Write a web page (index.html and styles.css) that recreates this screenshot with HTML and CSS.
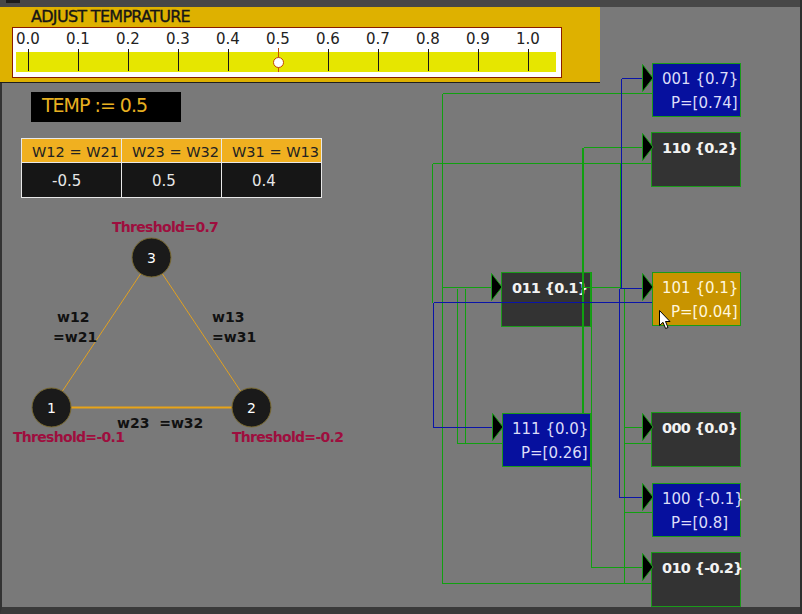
FILE: index.html
```html
<!DOCTYPE html>
<html>
<head>
<meta charset="utf-8">
<title>Hopfield</title>
<link rel="stylesheet" href="styles.css">
</head>
<body>
<div class="window">
  <div class="titlebar"><span class="tb-btn"></span></div>
  <div class="panel">
    <div class="panel-title">ADJUST TEMPRATURE</div>
    <div class="scale">
      <div class="labels">
        <span>0.0</span><span>0.1</span><span>0.2</span><span>0.3</span><span>0.4</span><span>0.5</span><span>0.6</span><span>0.7</span><span>0.8</span><span>0.9</span><span>1.0</span>
      </div>
      <div class="bar">
        <div class="marks"><span></span><span></span><span></span><span></span><span></span><span></span><span></span><span></span><span></span><span></span><span></span></div>
        <div class="knob-line"></div>
        <div class="knob"></div>
      </div>
    </div>
  </div>
  <div class="main">
    <div class="temp">TEMP := 0.5</div>
    <div class="weights">
      <div class="h">W12 = W21</div><div class="h">W23 = W32</div><div class="h">W31 = W13</div>
      <div class="d">-0.5</div><div class="d">0.5</div><div class="d">0.4</div>
    </div>
    <svg class="triangle" width="360" height="240" viewBox="0 0 360 240">
      <g class="edges">
        <line x1="149.5" y1="47.5" x2="49.5" y2="197.5"/>
        <line x1="149.5" y1="47.5" x2="249.5" y2="197.5"/>
        <line class="flat" x1="49.5" y1="197.5" x2="249.5" y2="197.5"/>
      </g>
      <g class="nodes">
        <circle cx="149.5" cy="47.5" r="19.5"/>
        <circle cx="49.5" cy="197.5" r="19.5"/>
        <circle cx="249.5" cy="197.5" r="19.5"/>
      </g>
      <text class="num" x="149.5" y="52.5">3</text>
      <text class="num" x="49.5" y="202.5">1</text>
      <text class="num" x="249.5" y="202.5">2</text>
      <text class="th" x="110" y="22">Threshold=0.7</text>
      <text class="th" x="11" y="232">Threshold=-0.1</text>
      <text class="th" x="230" y="232">Threshold=-0.2</text>
      <text class="wl" x="55" y="112">w12</text>
      <text class="wl" x="51" y="132">=w21</text>
      <text class="wl" x="210" y="112">w13</text>
      <text class="wl" x="210" y="132">=w31</text>
      <text class="wl" x="115" y="218" xml:space="preserve">w23  =w32</text>
    </svg>
  </div>

  <div class="net">
    <div class="node blue" style="left:652px;top:63px"><div class="l1">001 {0.7}</div><div class="l2">P=[0.74]</div></div>
    <div class="node dark" style="left:651px;top:132px"><div class="l1">110 {0.2}</div></div>
    <div class="node dark" style="left:501px;top:272px"><div class="l1">011 {0.1}</div></div>
    <div class="node gold" style="left:652px;top:272px"><div class="l1">101 {0.1}</div><div class="l2">P=[0.04]</div></div>
    <div class="node blue" style="left:502px;top:413px"><div class="l1">111 {0.0}</div><div class="l2">P=[0.26]</div></div>
    <div class="node dark" style="left:651px;top:412px"><div class="l1">000 {0.0}</div></div>
    <div class="node blue" style="left:652px;top:483px"><div class="l1">100 {-0.1}</div><div class="l2">P=[0.8]</div></div>
    <div class="node dark" style="left:651px;top:552px"><div class="l1">010 {-0.2}</div></div>

    <svg class="wires" width="802" height="614" viewBox="0 0 802 614" shape-rendering="crispEdges">
      <g class="green">
        <path d="M442.5 93.5 H652"/>
        <path d="M442.5 93.5 V583.5 H652"/>
        <path d="M432.5 163.5 H652"/>
        <path d="M432.5 163.5 V302.5"/>
        <path d="M583.5 147.5 H642"/>
        <path class="thick" d="M583 147.5 V413"/>
        <path d="M583.5 287.5 H620.5"/>
        <path d="M620.5 163.5 V287.5"/>
        <path d="M442.5 287.5 H491"/>
        <path d="M457.5 288.5 V443.5 H502"/>
        <path d="M465.5 288.5 V443.5"/>
        <path d="M591.5 272 V567.5 H642"/>
        <path d="M624.5 287.5 V583.5"/>
        <path d="M624.5 427.5 H642"/>
        <path d="M624.5 443.5 H652"/>
        <path d="M624.5 512.5 H652"/>
      </g>
      <g class="blue">
        <path d="M621.5 78.5 H642"/>
        <path d="M621.5 78.5 V288.5"/>
        <path d="M619.5 288.5 H642"/>
        <path d="M619.5 288.5 V497.5 H645"/>
        <path d="M433.5 302.5 H652"/>
        <path d="M433.5 302.5 V427.5 H495"/>
      </g>
      <g class="arrows" shape-rendering="auto">
        <polygon points="642.5,64.5 642.5,91.5 653,78"/>
        <polygon points="642.5,133.5 642.5,160.5 653,147"/>
        <polygon points="491.5,273.5 491.5,300.5 502,287"/>
        <polygon points="642.5,273.5 642.5,300.5 653,287"/>
        <polygon points="492.5,413.5 492.5,440.5 503,427"/>
        <polygon points="642.5,413.5 642.5,440.5 653,427"/>
        <polygon points="642.5,483.5 642.5,510.5 653,497"/>
        <polygon points="642.5,553.5 642.5,580.5 653,567"/>
      </g>
    </svg>
    <svg class="cursor" width="13" height="20" viewBox="0 0 13 20">
      <path d="M0.5 0.5 L0.5 15.5 L4 12.3 L6.6 18.5 L9 17.5 L6.5 11.5 L11 11.5 Z"/>
    </svg>
  </div>
</div>
</body>
</html>
```

FILE: styles.css
```css
* { box-sizing: border-box; }
html, body { margin: 0; padding: 0; }
body {
  width: 802px;
  height: 614px;
  overflow: hidden;
  background: #797979;
  font-family: "DejaVu Sans", "Noto Sans", sans-serif;
}
.window {
  position: relative;
  width: 802px;
  height: 614px;
  background: #797979;
  border-right: 2px solid #2e2e2e;
  overflow: hidden;
}
.titlebar {
  height: 7px;
  background: #474747;
  display: flex;
  align-items: flex-start;
}
.tb-btn {
  width: 14px;
  height: 3px;
  margin-left: 6px;
  background: #1c1c1c;
}
.panel {
  width: 600px;
  height: 76px;
  background: #deb100;
  border-bottom: 1px solid #1e1e1e;
}
.panel-title {
  height: 20px;
  padding-left: 31px;
  font-size: 16px;
  line-height: 19px;
  letter-spacing: -0.7px;
  color: #161616;
  -webkit-text-stroke: 0.35px #161616;
  white-space: nowrap;
}
.scale {
  margin-left: 12px;
  width: 550px;
  height: 51px;
  background: #fff;
  border: 1px solid #8a1c00;
}
.labels {
  display: flex;
  margin-left: -10px;
  height: 24px;
  padding-top: 3px;
  font-size: 15px;
  line-height: 16px;
  color: #222;
}
.labels span {
  flex: none;
  width: 50px;
  text-align: center;
}
.bar {
  position: relative;
  margin-left: 3px;
  width: 540px;
  height: 20px;
  background: #e6e600;
}
.marks {
  display: flex;
  margin-left: -13px;
}
.marks span {
  flex: none;
  width: 50px;
  display: flex;
  justify-content: center;
}
.marks span::before {
  content: "";
  width: 1px;
  height: 22px;
  margin-top: -3px;
  background: #151515;
}
.knob-line {
  position: absolute;
  left: 262px;
  top: -4px;
  width: 1px;
  height: 24px;
  background: #c85000;
}
.knob {
  position: absolute;
  left: 257px;
  top: 5px;
  width: 11px;
  height: 11px;
  border-radius: 50%;
  background: #fff;
  border: 1.5px solid #c04800;
}
.main {
  height: 531px;
  padding-top: 9px;
  border-left: 2px solid #333;
  border-bottom: 7px solid #3a3a3a;
}
.temp {
  margin-left: 29px;
  width: 150px;
  height: 30px;
  padding-left: 11px;
  background: #000;
  color: #e8b020;
  font-size: 19px;
  line-height: 27px;
  letter-spacing: -1px;
  white-space: nowrap;
}
.weights {
  margin: 16px 0 0 19px;
  display: grid;
  grid-template-columns: repeat(3, 99px);
  gap: 1px;
  width: fit-content;
  background: #e8e8e8;
  border: 1px solid #e8e8e8;
}
.weights .h {
  height: 23px;
  padding: 3px 0 0 10px;
  line-height: 20px;
  background: #f0b020;
  color: #222;
  font-size: 14.5px;
  white-space: nowrap;
}
.weights .d {
  height: 34px;
  padding: 3px 0 0 30px;
  line-height: 31px;
  background: #161616;
  color: #e6e6e6;
  font-size: 15px;
}
.triangle {
  display: block;
  margin-top: 12px;
}
.triangle .edges line {
  stroke: #e0a020;
  stroke-width: 1;
}
.triangle .edges line.flat {
  stroke: #e8a418;
  stroke-width: 2;
}
.triangle .nodes circle {
  fill: #1a1a1a;
  stroke: #7a6a30;
  stroke-width: 1;
}
.triangle .num {
  fill: #fff;
  font-size: 14px;
  text-anchor: middle;
  font-family: "DejaVu Sans", sans-serif;
}
.triangle .th {
  fill: #9e0e3e;
  font-family: "DejaVu Sans", sans-serif;
  font-weight: bold;
  font-size: 14px;
  letter-spacing: -0.7px;
}
.triangle .wl {
  fill: #111;
  font-family: "DejaVu Sans", sans-serif;
  font-weight: bold;
  font-size: 14px;
}
.net {
  position: absolute;
  left: 0;
  top: 0;
  width: 802px;
  height: 607px;
  overflow: hidden;
}
.node {
  position: absolute;
  width: 89px;
  height: 54px;
  padding-top: 3px;
  border: 1px solid #1a9a1a;
  font-size: 15px;
  line-height: 24px;
  white-space: nowrap;
}
.node .l1 { padding-left: 9px; }
.node .l2 { padding-left: 18px; }
.node.blue { background: #06109e; color: #dcdcf8; }
.node.gold { background: #c89400; color: #fff6dc; }
.node.dark {
  width: 90px;
  height: 55px;
  background: #333;
  color: #f2f2f2;
  font-size: 14.5px;
  font-weight: bold;
  letter-spacing: -0.7px;
}
.node.dark .l1 { padding-left: 10px; }
.wires {
  position: absolute;
  left: 0;
  top: 0;
}
.wires path {
  fill: none;
  stroke-width: 1;
}
.wires .green path { stroke: #10a010; }
.wires .green path.thick { stroke-width: 2; }
.wires .blue path { stroke: #0a14a8; }
.wires .arrows polygon {
  fill: #000;
  stroke: #1a9a1a;
  stroke-width: 1;
}
.cursor {
  position: absolute;
  left: 659px;
  top: 310px;
}
.cursor path {
  fill: #fff;
  stroke: #000;
  stroke-width: 1;
}
```
